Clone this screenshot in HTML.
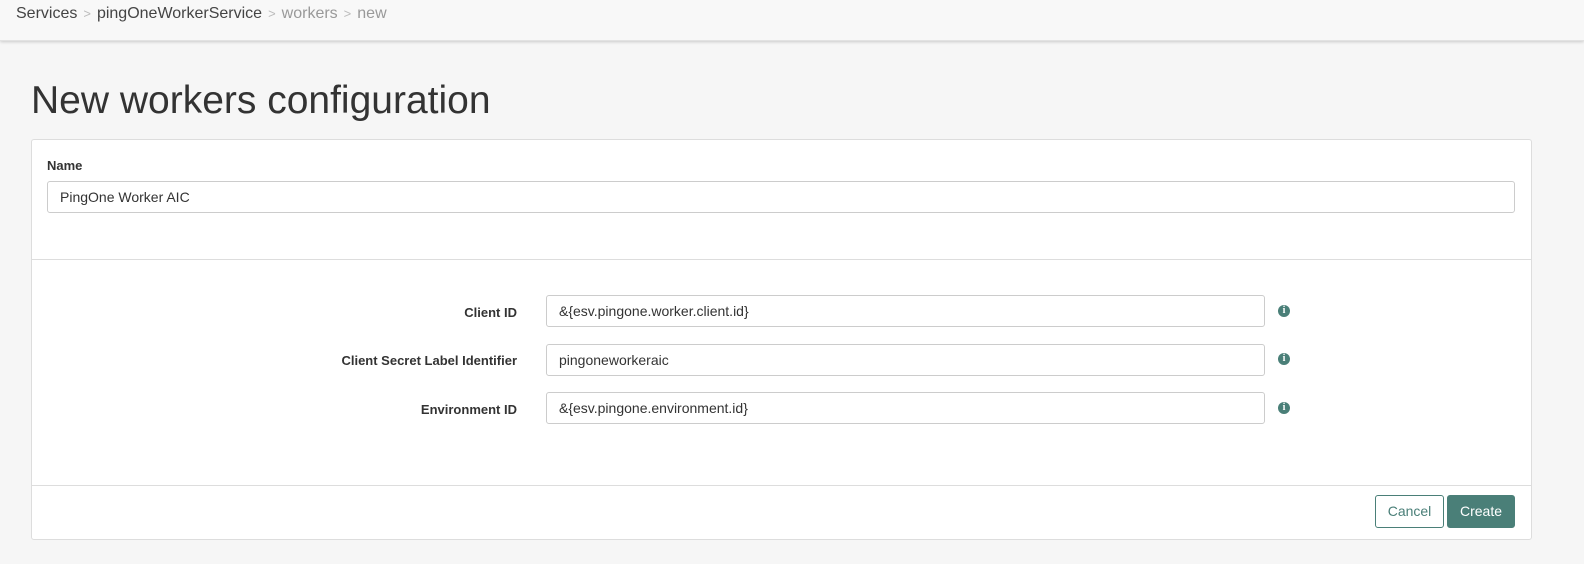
<!DOCTYPE html>
<html><head><style>
body{margin:0;width:1584px;height:564px;background:#f6f6f6;font-family:"Liberation Sans",sans-serif;color:#333;position:relative;overflow:hidden}
.top{position:absolute;left:0;top:0;width:1584px;height:40px;background:#f8f8f8;box-shadow:0 1px 3px rgba(0,0,0,.18);border-bottom:1px solid #e2e2e2}
.bc{position:absolute;left:16px;top:5px;font-size:16px;color:#444}
.bc .s{color:#bbb;font-size:13px;margin:0 6px}
.bc .g{color:#999}
h1{position:absolute;left:31px;top:79px;margin:0;font-weight:normal;font-size:39px;color:#333}
.panel{position:absolute;left:31px;top:139px;width:1499px;height:399px;background:#fff;border:1px solid #ddd;border-radius:3px}
.hr{position:absolute;left:0;width:1499px;height:1px;background:#ddd}
.lbl{position:absolute;font-size:13px;font-weight:bold;color:#333}
.inp{position:absolute;height:32px;border:1px solid #ccc;border-radius:3px;box-sizing:border-box;font-size:14px;padding:0 12px;line-height:30px;color:#333}
.info{position:absolute;width:12px;height:12px;border-radius:50%;background:#4a7f78;color:#fff;font-size:10px;font-weight:bold;text-align:center;line-height:12px;font-family:"Liberation Serif",serif}
.btn{position:absolute;top:355px;height:33px;box-sizing:border-box;border-radius:3px;font-size:14px;line-height:31px;text-align:center}
</style></head><body>
<div class="top"><div class="bc">Services<span class="s">&gt;</span>pingOneWorkerService<span class="s">&gt;</span><span class="g">workers</span><span class="s">&gt;</span><span class="g">new</span></div></div>
<h1>New workers configuration</h1>
<div class="panel">
<div class="lbl" style="left:15px;top:18px">Name</div>
<div class="inp" style="left:15px;top:41px;width:1468px">PingOne Worker AIC</div>
<div class="hr" style="top:119px"></div>
<div class="lbl" style="right:1014px;top:165px">Client ID</div>
<div class="inp" style="left:514px;top:155px;width:719px">&amp;{esv.pingone.worker.client.id}</div>
<div class="info" style="left:1246px;top:165px">i</div>
<div class="lbl" style="right:1014px;top:213px">Client Secret Label Identifier</div>
<div class="inp" style="left:514px;top:204px;width:719px">pingoneworkeraic</div>
<div class="info" style="left:1246px;top:213px">i</div>
<div class="lbl" style="right:1014px;top:262px">Environment ID</div>
<div class="inp" style="left:514px;top:252px;width:719px">&amp;{esv.pingone.environment.id}</div>
<div class="info" style="left:1246px;top:262px">i</div>
<div class="hr" style="top:345px"></div>
<div class="btn" style="left:1343px;width:69px;border:1px solid #4a7f78;color:#4a7f78;background:#fff">Cancel</div>
<div class="btn" style="left:1415px;width:68px;background:#4a7f78;color:#fff;border:1px solid #4a7f78">Create</div>
</div>
</body></html>
